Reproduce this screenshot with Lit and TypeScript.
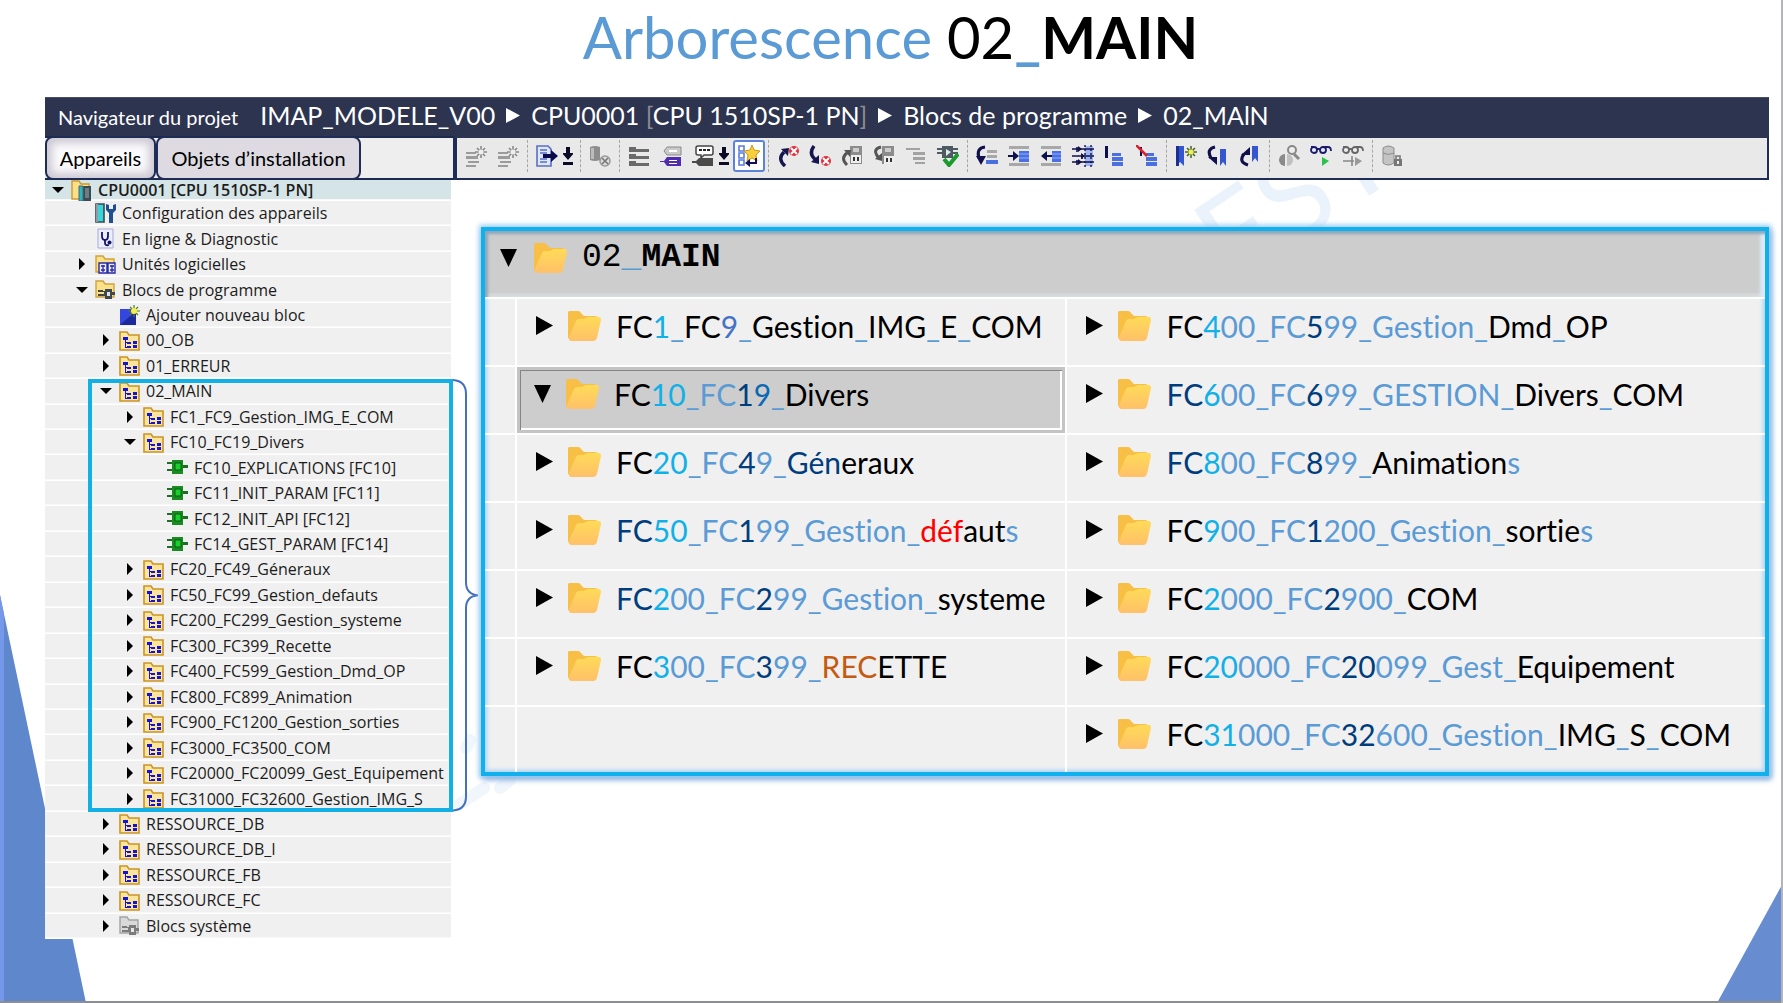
import { LitElement, html, svg, css, nothing } from "lit";
import type { TemplateResult } from "lit";
import { customElement } from "lit/decorators.js";
import { classMap } from "lit/directives/class-map.js";

type State = "open" | "closed" | "leaf";

interface TreeRow {
  level: number;
  state: State;
  icon: string;
  label: string;
}

const row = (level: number, state: State, icon: string, label: string): TreeRow => ({ level, state, icon, label });

const TREE: TreeRow[] = [
  row(0, "open", "cpu", "CPU0001 [CPU 1510SP-1 PN]"),
  row(1, "leaf", "config", "Configuration des appareils"),
  row(1, "leaf", "diag", "En ligne & Diagnostic"),
  row(1, "closed", "units", "Unités logicielles"),
  row(1, "open", "blocks", "Blocs de programme"),
  row(2, "leaf", "add", "Ajouter nouveau bloc"),
  row(2, "closed", "group", "00_OB"),
  row(2, "closed", "group", "01_ERREUR"),
  row(2, "open", "group", "02_MAIN"),
  row(3, "closed", "group", "FC1_FC9_Gestion_IMG_E_COM"),
  row(3, "open", "group", "FC10_FC19_Divers"),
  row(4, "leaf", "fc", "FC10_EXPLICATIONS [FC10]"),
  row(4, "leaf", "fc", "FC11_INIT_PARAM [FC11]"),
  row(4, "leaf", "fc", "FC12_INIT_API [FC12]"),
  row(4, "leaf", "fc", "FC14_GEST_PARAM [FC14]"),
  row(3, "closed", "group", "FC20_FC49_Géneraux"),
  row(3, "closed", "group", "FC50_FC99_Gestion_defauts"),
  row(3, "closed", "group", "FC200_FC299_Gestion_systeme"),
  row(3, "closed", "group", "FC300_FC399_Recette"),
  row(3, "closed", "group", "FC400_FC599_Gestion_Dmd_OP"),
  row(3, "closed", "group", "FC800_FC899_Animation"),
  row(3, "closed", "group", "FC900_FC1200_Gestion_sorties"),
  row(3, "closed", "group", "FC3000_FC3500_COM"),
  row(3, "closed", "group", "FC20000_FC20099_Gest_Equipement"),
  row(3, "closed", "group", "FC31000_FC32600_Gestion_IMG_S"),
  row(2, "closed", "group", "RESSOURCE_DB"),
  row(2, "closed", "group", "RESSOURCE_DB_I"),
  row(2, "closed", "group", "RESSOURCE_FB"),
  row(2, "closed", "group", "RESSOURCE_FC"),
  row(2, "closed", "system", "Blocs système"),
];

/* Each segment starts with its colour key: k black, c cyan, b blue, n navy,
   i indigo, m medium blue, r red, o orange. */
const LEFT = [
  "kFC|c1|b_|kFC|i9|b_|kGestion|b_|kIMG|b_|kE|b_|kCOM",
  "kFC|c10|b_FC|n1|m9|b_|kDivers",
  "kFC|c20|b_FC|n4|b9_|nGén|keraux",
  "nFC|c50|b_FC|n1|b99_Gestion_|rdéf|kaut|bs",
  "nFC|c2|b00_FC|n2|b99_Gestion_|ksysteme",
  "kFC|c3|b00_FC|n3|b99_|oREC|kETTE",
  "",
];
const RIGHT = [
  "kFC|c4|b00_FC|n5|b99_Gestion_|kDmd|b_|kOP",
  "nFC|c6|b00_FC|n6|b99_GESTION_|kDivers|b_|kCOM",
  "nFC|c8|b00_FC|n8|b99_|kAnimation|bs",
  "kFC|c9|b00_FC|n1|b200_Gestion_|ksortie|bs",
  "kFC|c2|b000_FC|n2|b900_|kCOM",
  "kFC|c20|b000_FC|n20|b099_Gest_|kEquipement",
  "kFC|c31|b000_FC|n32|b600_Gestion_|kIMG|b_|kS|b_|kCOM",
];

const folderBase = (fill: string, edge: string) => svg`
  <path d="M1 2h7l2 3h9v13H1z" fill=${fill} stroke=${edge} stroke-width="1.4"/>`;

const TREE_ICONS: Record<string, TemplateResult> = {
  cpu: svg`<path d="M1 1h7l2 3h8v15H1z" fill="#fbe08a" stroke="#c99a35" stroke-width="1.4"/>
    <path d="M8 6h12v15H8z" fill="#3b4a54"/><path d="M8 6h4v15H8z" fill="#2bb7c0" stroke="#52656d"/>
    <path d="M14 8h4v10h-4z" fill="#6d7d86"/>`,
  config: svg`<path d="M1 1h8v18H1z" fill="#39d5dc" stroke="#3a4a52" stroke-width="1.6"/>
    <path d="M1 1h2v18H1z" fill="#8e9ca3"/>
    <path d="M11 1v6l3 3v10h4V10l3-3V1l-3 1v4h-4V2z" fill="#1e5091"/>`,
  diag: svg`<path d="M3 1h15v19H3z" fill="#eceefb" stroke="#a5abd6"/>
    <path d="M7 4v4q0 4 3 4t3-4V4M10 12v3q0 3 4 2" fill="none" stroke="#16166c" stroke-width="1.8"/>
    <circle cx="14.500" cy="14.500" r="2" fill="#16166c"/>`,
  units: svg`${folderBase("#fbe08a", "#d0a23a")}
    <path d="M4 9h8v10H4zM13 9h7v10h-7z" fill="#e8eaff" stroke="#2a2aa0" stroke-width="1.4"/>
    <path d="M6 12h4M6 16h4M15 12h4M15 16h4M8 11v7M17 11v7" stroke="#2a2aa0" stroke-width="1.3"/>`,
  blocks: svg`${folderBase("#fbe08a", "#d0a23a")}
    <path d="M3 11h5v1h2v-2h7v3h3v3h-3v4h-7v-3H3v-2h6v-2H3z" fill="#3f474d"/><path d="M12 13h3v4h-3z" fill="#dfe3e6"/>`,
  system: svg`${folderBase("#d9d9d9", "#a3a3a3")}
    <path d="M3 11h5v1h2v-2h7v3h3v3h-3v4h-7v-3H3v-2h6v-2H3z" fill="#7c7c7c"/><path d="M12 13h3v4h-3z" fill="#e6e6e6"/>`,
  add: svg`<path d="M1 4h16v16H1z" fill="#3347de"/><path d="M1 20L17 6v14z" fill="#1c2a9c"/>
    <path d="M15 0v12M9 6h12M11 2l8 8M19 2l-8 8" stroke="#5c7a1c" stroke-width="1.2"/>
    <circle cx="15" cy="6" r="3" fill="#f2f04a"/>`,
  group: svg`<path d="M1 2h7l2 3h10v15H1z" fill="#fbe59a" stroke="#c99425" stroke-width="1.6"/>
    <path d="M4 7h5v3H4zM8 12h4v2H8zM14 11h4v3h-4zM8 16h4v2H8zM14 15h4v3h-4zM6 10h1v8H6zM6 12h3v1H6zM6 17h3v1H6z" fill="#1414d2"/>`,
  fc: svg`<path d="M0 5h5v2H0zM0 12h5v2H0zM15 8h6v3h-6z" fill="#1c6e22"/>
    <path d="M5 3h11v14H5z" fill="#1a8a22"/><path d="M8 6h6v7H8z" fill="#17d02c" stroke="#0b5a12"/>`,
};

const caret = svg`<path d="M4 1h4v6h4l-6 7-6-7h4z" fill="#0b0b28" transform="translate(-1)"/><path d="M0 16h10v3H0z" fill="#0b0b28"/>`;

const spark = (color: string, core: string) => svg`
  <path d="M16 1v12M10 7h12M12 3l8 8M20 3l-8 8" stroke=${color} stroke-width="1.6" stroke-dasharray="4 4"/>
  <circle cx="16" cy="7" r="2.500" fill=${core}/>`;

const TOOLS: Record<string, TemplateResult> = {
  insert: svg`<path d="M1 7h10v2H1zM1 11h12v3H1zM3 16h11v2H3zM1 20h10v2H1z" fill="#9b9b9b"/>${spark("#8a8a8a", "#eee")}`,
  export: svg`<path d="M1 1h11l3 3v17H1z" fill="#dfe6ff" stroke="#5a6fc4" stroke-width="1.6"/>
    <path d="M4 5h7M4 8h7M4 14h7M4 17h7" stroke="#5a6fc4" stroke-width="1.4"/>
    <path d="M7 9h8V5l7 6-7 6v-4H7z" fill="#0a0a4a"/>`,
  database: svg`<path d="M1 2q5-2 10 0v13q-5 2-10 0z" fill="#8d8d8d"/><path d="M2 3h3v11H2z" fill="#bbb"/>
    <circle cx="16" cy="16" r="5" fill="#ddd" stroke="#999" stroke-width="1.5"/><path d="M13 13l6 6M19 13l-6 6" stroke="#777" stroke-width="1.6"/>`,
  networks: svg`<path d="M1 2h7v2h13v3H1zM1 9h7v2h13v3H1zM1 16h7v2h13v3H1z" fill="#6a6a6a"/>`,
  tags: svg`<path d="M7 2h14v8H7L4 6z" fill="#c9c9c9" stroke="#8b8b8b"/><path d="M0 16h4l3-4h14v9H7l-3-4H0z" fill="#4f2bb0"/>
    <path d="M9 5h8v2H9zM9 15h8v1H9zM9 18h8v1H9z" fill="#fff"/>`,
  comment: svg`<path d="M6 1h13q2 0 2 2v5q0 2-2 2h-7l-3 3V10H6Q4 10 4 8V3q0-2 2-2z" fill="#fff" stroke="#444" stroke-width="1.5"/>
    <path d="M7 4h3v2H7zM11 4h3v2h-3zM15 4h3v2h-3z" fill="#222"/><path d="M0 16h4l3-3h14v8H7l-3-3H0z" fill="#4a4a4a"/>`,
  favorites: svg`<path d="M1 1h5v5H1zM1 8h5v5H1zM1 15h5v5H1z" fill="#fff" stroke="#5a7be0" stroke-width="1.6"/>
    <path d="M14 0l2 5 6 1-4 4 1 6-5-3-5 3 1-6-4-4 6-1z" fill="#f7cf3c" stroke="#c9971b"/>
    <path d="M18 13v5h-8" fill="none" stroke="#12125a" stroke-width="2"/><path d="M12 14v8l-5-4z" fill="#12125a"/>`,
  prevError: svg`<path d="M8 21Q0 14 7 7" fill="none" stroke="#16164e" stroke-width="3.500"/><path d="M4 4l8-1-1 8z" fill="#16164e"/>
    <circle cx="17" cy="6" r="5" fill="#e0323c"/><path d="M14 3l6 6M20 3l-6 6" stroke="#fff" stroke-width="2"/>`,
  nextError: svg`<path d="M5 1Q-1 9 7 15" fill="none" stroke="#16164e" stroke-width="3.500"/><path d="M10 10l0 9-8-2z" fill="#16164e"/>
    <circle cx="17" cy="16" r="5" fill="#e0323c"/><path d="M14 13l6 6M20 13l-6 6" stroke="#fff" stroke-width="2"/>`,
  jumpUp: svg`<path d="M9 1h12v18H9z" fill="#8c8c8c"/><path d="M12 3h6v4h-6z" fill="#ccc"/><path d="M10 10h10v8H10z" fill="#eee"/>
    <path d="M12 12h2v4h-2zM16 12h2v4h-2z" fill="#333"/><path d="M6 20Q-1 13 6 8" fill="none" stroke="#555" stroke-width="3"/><path d="M3 5l7 0-1 7z" fill="#555"/>`,
  jumpDown: svg`<path d="M9 1h12v18H9z" fill="#8c8c8c"/><path d="M12 3h6v4h-6z" fill="#ccc"/><path d="M11 11h10v8H11z" fill="#eee"/>
    <path d="M13 13h2v4h-2zM17 13h2v4h-2z" fill="#333"/><path d="M8 2Q-1 4 5 12" fill="none" stroke="#555" stroke-width="3"/><path d="M9 8v8l-7-2z" fill="#555"/>`,
  list: svg`<path d="M1 3h14v2H1zM8 7h12v3H8zM8 12h12v3H8zM10 17h10v2H10z" fill="#a2a2a2"/>`,
  compile: svg`<path d="M5 1h11v2h5v2h-5v2h5v2h-5v4H5V9H0V7h5V5H0V3h5z" fill="#4d5a62"/><path d="M9 4l5 3-5 4z" fill="#e2e8ea"/>
    <path d="M7 14l5 6 9-11" fill="none" stroke="#189a2c" stroke-width="4"/>`,
  goto: svg`<path d="M9 2Q0 3 3 13" fill="none" stroke="#10104c" stroke-width="3.200"/><path d="M0 11h10l-5 9z" fill="#10104c"/>
    <path d="M11 5h10v3H11zM11 10h10v3H11z" fill="#a8a8a8"/><path d="M10 15h12v4H10z" fill="#4a6fe0"/>`,
  indent: svg`<path d="M1 1h20v3H1zM1 18h20v3H1z" fill="#a8a8a8"/><path d="M11 6h10v11H11z" fill="#4a6fe0"/><path d="M11 9h10M11 13h10" stroke="#8fb0ff"/>
    <path d="M0 10h5V6l6 5-6 5v-4H0z" fill="#10104c"/>`,
  outdent: svg`<path d="M1 1h20v3H1zM1 18h20v3H1z" fill="#a8a8a8"/><path d="M12 6h9v11h-9z" fill="#4a6fe0"/><path d="M12 9h9M12 13h9" stroke="#8fb0ff"/>
    <path d="M12 10H7V6l-6 5 6 5v-4h5z" fill="#10104c"/>`,
  grid: svg`<path d="M13 1h8v20h-8z" fill="#9fb6f2"/><path d="M0 4h22M0 11h22M0 17h22M5 2v5M10 9v5M5 15v5" stroke="#10104c" stroke-width="1.600"/>
    <path d="M13 0v22M19 0v22" stroke="#10104c" stroke-width="1.400" stroke-dasharray="2 2"/><path d="M6 1l4 3-4 3zM9 8l4 3-4 3zM6 14l4 3-4 3z" fill="#10104c"/>`,
  setMark: svg`<path d="M1 1h3v12H1z" fill="#10104c"/><path d="M8 8h9v3H8zM8 12h11v4H8zM8 17h11v4H8z" fill="#4a6fe0"/>`,
  clearMark: svg`<path d="M4 2h2v9H4z" fill="#10104c"/><path d="M9 8h9v3H9zM10 12h11v4H10zM10 17h11v4H10z" fill="#4a6fe0"/>
    <path d="M0 0l11 11" stroke="#d8232e" stroke-width="2.600"/>`,
  bookmark: svg`<path d="M1 1h8v20l-4-4-4 4z" fill="#3457cf"/><path d="M1 1h3v20l-3 0z" fill="#1b2f8f"/>${spark("#4d6a2a", "#f2f04a")}`,
  nextBookmark: svg`<path d="M8 2Q-1 4 4 13" fill="none" stroke="#10104c" stroke-width="3.200"/><path d="M1 12h9v8z" fill="#10104c"/>
    <path d="M13 4h6v17l-3-4-3 4z" fill="#3457cf"/>`,
  prevBookmark: svg`<path d="M9 20Q-1 17 5 9" fill="none" stroke="#10104c" stroke-width="3.200"/><path d="M2 10h9V2z" fill="#10104c"/>
    <path d="M13 1h6v16l-3-4-3 4z" fill="#3457cf"/>`,
  compare: svg`<circle cx="14" cy="5" r="4" fill="#eee" stroke="#888" stroke-width="2"/><path d="M16 9l5 5" stroke="#888" stroke-width="3"/>
    <path d="M7 9v12A6 6 0 0 1 7 9z" fill="#8a8a8a"/><path d="M9 9v12A6 6 0 0 0 9 9z" fill="#c0c0c0"/>`,
  monitor: svg`<circle cx="4" cy="5" r="3" fill="#e6eaff" stroke="#1b1b6e" stroke-width="1.800"/><circle cx="13" cy="5" r="3" fill="#e6eaff" stroke="#1b1b6e" stroke-width="1.800"/>
    <path d="M1 2h3M7 4h3M13 2h5q3 0 3 4" fill="none" stroke="#1b1b6e" stroke-width="1.800"/><path d="M12 12l7 4-7 5z" fill="#2ac24a"/>`,
  monitorOff: svg`<circle cx="4" cy="5" r="3" fill="#eee" stroke="#666" stroke-width="1.800"/><circle cx="13" cy="5" r="3" fill="#eee" stroke="#666" stroke-width="1.800"/>
    <path d="M1 2h3M7 4h3M13 2h5q3 0 3 4" fill="none" stroke="#666" stroke-width="1.800"/><path d="M1 16h11M10 11v10" stroke="#888" stroke-width="1.600"/><path d="M13 12l7 4-7 5z" fill="#999"/>`,
  locked: svg`<path d="M2 3q5-4 11 0v15q-6 4-11 0z" fill="#c4c4c4" stroke="#8c8c8c"/><path d="M2 8q5 3 11 0" fill="none" stroke="#8c8c8c"/>
    <path d="M13 14h8v7h-8z" fill="#777"/><path d="M15 14v-3h4v3" fill="none" stroke="#777" stroke-width="1.600"/><path d="M16 16h2v3h-2z" fill="#eee"/>`,
};

/* "|" is a separator, "caret" a drop-down arrow; the rest are [icon, name]. */
const TOOLBAR: (string | [string, string])[] = [
  ["insert", "Insérer réseau"], ["insert", "Supprimer réseau"], "|",
  ["export", "Exporter"], "caret", "|",
  ["database", "Base"], "|",
  ["networks", "Réseaux"], ["tags", "Variables"], ["comment", "Commentaires"], "caret", ["favorites", "Favoris"], "|",
  ["prevError", "Erreur précédente"], ["nextError", "Erreur suivante"], ["jumpUp", "Précédent"], ["jumpDown", "Suivant"], ["list", "Liste"], ["compile", "Compiler"], "|",
  ["goto", "Aller à"], ["indent", "Retrait"], ["outdent", "Retrait négatif"], ["grid", "Grille"], ["setMark", "Commenter"], ["clearMark", "Décommenter"], "|",
  ["bookmark", "Signet"], ["nextBookmark", "Signet suivant"], ["prevBookmark", "Signet précédent"], "|",
  ["compare", "Comparer"], ["monitor", "Visualiser"], ["monitorOff", "Arrêter"], "|",
  ["locked", "Verrou"],
];

@customElement("app-root")
export class AppRoot extends LitElement {
  static styles = css`
    :host {
      display: block;
      color: #000;
      font-family: Lato, "Liberation Sans", sans-serif;
      font-variant-ligatures: none;
    }
    * { box-sizing: border-box; }
    button {
      font: inherit;
      color: inherit;
      background: none;
      border: 0;
      padding: 0;
      margin: 0;
      cursor: pointer;
    }
    a { color: inherit; text-decoration: none; }
    svg { display: block; }

    .slide {
      position: relative;
      z-index: 0;
      display: flex;
      flex-direction: column;
      min-height: 100vh;
      padding: 0 12px 64px 45px;
      background: #fff;
      border-right: 2px solid #b4b4b8;
      overflow: hidden;
    }
    .decor { position: absolute; z-index: -1; bottom: 0; }
    .wedge-left { left: 0; width: 86px; height: 408px; }
    .wedge-right { right: -2px; width: 66px; height: 120px; }
    .base-line { left: 0; right: -2px; height: 2px; background: #8c8e94; z-index: 2; }
    .watermark {
      position: absolute;
      z-index: -1;
      left: 1190px;
      top: 126px;
      transform: rotate(-34deg);
      font-size: 120px;
      line-height: 132px;
      color: #eaf2fb;
    }
    .smudge { position: absolute; z-index: -1; left: 440px; top: 710px; width: 90px; height: 100px; }

    h1 {
      margin: 0 0 0 -33px;
      height: 97px;
      padding-top: 4px;
      font-size: 58px;
      line-height: 66px;
      font-weight: 400;
      text-align: center;
      white-space: nowrap;
    }
    h1 b { font-weight: 700; }

    .k { color: #000; }
    .c { color: #10b0e8; }
    .b { color: #5b9bd5; }
    .n { color: #003d7c; }
    .i { color: #4472c4; }
    .m { color: #0a68b4; }
    .r { color: #f00; }
    .o { color: #c55a11; }

    .titlebar {
      display: flex;
      align-items: center;
      height: 39px;
      padding: 0 0 4px 13px;
      background: #2d3450;
      border-top: 1px solid #4b4d5e;
      color: #fff;
      white-space: nowrap;
    }
    .titlebar h2 { margin: 0 22px 0 0; font-size: 20px; line-height: 24px; font-weight: 400; padding-top: 4px; }
    .crumbs { display: flex; align-items: center; gap: 11px; font-size: 25px; line-height: 30px; }
    .crumbs .dim { color: #8d8c90; }
    .play { width: 14px; height: 15px; fill: #fff; }

    .bars { display: flex; height: 44px; }
    .tabs {
      display: flex;
      width: 408px;
      background: #eee;
      border: solid #1c2a50;
      border-width: 2px 0;
    }
    .tab {
      margin: -2px 0 -2px;
      height: 44px;
      border: 2px solid #1f2c55;
      border-radius: 8px;
      background: #dddae2;
      font-size: 20px;
      line-height: 24px;
      white-space: nowrap;
    }
    .tab.devices {
      width: 111px;
      background: #fbfafc;
      box-shadow: inset 0 0 8px 5px #cbc8d2;
    }
    .tab.setup { width: 205px; }
    .toolbar {
      flex: 1;
      display: flex;
      align-items: center;
      padding: 0 0 5px 3px;
      background: #e9e9ea;
      border: 2px solid #1f2c55;
      border-left-width: 4px;
      border-top-color: #2d3450;
      min-width: 0;
      overflow: hidden;
    }
    .tool { display: grid; place-items: center; width: 32px; height: 32px; flex: none; }
    .tool svg { width: 22px; height: 22px; }
    .tool.active { box-shadow: inset 0 0 0 2px #5b84d8; border-radius: 3px; background: #fff; }
    .drop { width: 14px; flex: none; }
    .drop svg { width: 10px; height: 19px; }
    .sep { flex: none; width: 1px; height: 32px; margin: 0 3px; border-left: 1px dashed #a5a5a5; }

    .body {
      flex: 1;
      display: grid;
      grid-template-columns: 406px 30px minmax(0, 1fr);
      grid-template-rows: 21px repeat(29, minmax(24px, 1fr));
    }
    .tree {
      grid-column: 1;
      grid-row: 1 / -1;
      display: grid;
      grid-template-rows: subgrid;
      margin: 0;
      padding: 0;
      list-style: none;
      font-family: "Open Sans", "Noto Sans", sans-serif;
      font-size: 16px;
      line-height: 20px;
      color: #1c1c1c;
      background: #f0f0f0;
    }
    .node {
      display: flex;
      align-items: center;
      border-bottom: 1px solid #fff;
      box-shadow: inset 0 -1px #f8f8f8;
      padding-left: 5px;
      white-space: nowrap;
      min-height: 0;
    }
    .node.root { background: #d5e4e6; font-weight: 600; }
    .l1 { padding-left: 29px; }
    .l2 { padding-left: 53px; }
    .l3 { padding-left: 77px; }
    .l4 { padding-left: 101px; }
    .toggle { display: grid; place-items: center; width: 16px; height: 20px; margin-right: 5px; flex: none; }
    .toggle svg { width: 12px; height: 12px; }
    .node-icon { width: 21px; height: 21px; margin-right: 6px; flex: none; }

    .frame {
      grid-column: 1;
      grid-row: 9 / 26;
      margin: 0 -2px 0 43px;
      border: 4px solid #12b0e4;
      z-index: 1;
      pointer-events: none;
    }
    .brace { grid-column: 2; grid-row: 9 / 26; width: 26px; height: 100%; margin-left: 2px; }

    .panel {
      grid-column: 3;
      grid-row: 1 / -1;
      align-self: start;
      margin-top: 47px;
      border: 4px solid #0fb0ec;
      box-shadow: 0 0 5px 2px #9ccdf5, 2px 3px 6px #6b93c8;
      background: #f0f0f0;
    }
    table { width: 100%; table-layout: fixed; border-collapse: collapse; box-shadow: inset 0 0 4px 2px #a9d3f7; }
    .c-indent { width: 31px; }
    .c-left { width: 43%; }
    th, td { padding: 0; font-weight: 400; text-align: left; vertical-align: top; }
    td { height: 68px; border: 2px solid #fff; border-width: 2px 2px 0 0; }
    td:last-child { border-right: 0; }
    tr:last-child td { height: 66px; }
    .head {
      height: 67px;
      background: #cdcdcd;
      box-shadow: inset 3px 3px 3px #8fa5ba, inset -5px 0 3px #dbeaf8, inset 0 -4px 2px #d6d6d6;
    }
    .entry { display: flex; align-items: center; height: 53px; padding-left: 19px; font-size: 30px; line-height: 36px; white-space: nowrap; }
    .entry .mark { margin-right: 15px; }
    .entry .folder { margin-right: 15px; }
    .head .entry { padding-left: 15px; font-family: "Liberation Mono", monospace; font-size: 33px; }
    .head .mark { margin-right: 17px; }
    .mark { width: 17px; height: 19px; flex: none; }
    .folder { width: 33px; height: 30px; flex: none; }
    .picked { background: #cdcdcd; box-shadow: inset 0 0 0 3px #c4c4c4, inset 4px 4px 0 #858585, inset -5px -5px 0 #fff; }
    .picked .entry { padding-left: 17px; }
  `;

  private segments(text: string) {
    return text.split("|").map((s) => html`<span class=${s[0]}>${s.slice(1)}</span>`);
  }

  private mark(open: boolean) {
    return html`<svg class="mark" viewBox="0 0 17 19" aria-hidden="true">
      <path d=${open ? "M0 1h17L8.5 19z" : "M0 0l17 9.500L0 19z"}></path>
    </svg>`;
  }

  private folder() {
    return html`<svg class="folder" viewBox="0 0 33 30" aria-hidden="true">
      <defs>
        <linearGradient id="front" x1="0" y1="0" x2="0" y2="1">
          <stop offset="0" stop-color="#ffdb58"></stop><stop offset="1" stop-color="#ffc069"></stop>
        </linearGradient>
      </defs>
      <path d="M0 1q0-1 2-1h8q2 0 3 2l3 3h11q3 0 3 3v3L24 28H3q-3 0-3-2z" fill="#f7bf45"></path>
      <path d="M8 10q1-2 3-2h5l4-2h11q2 0 2 3l-4 18q-1 3-3 3H4q-4 0-3-4z" fill="url(#front)"></path>
    </svg>`;
  }

  private entry(text: string, open = false) {
    if (!text) return nothing;
    return html`<div class="entry">${this.mark(open)}${this.folder()}<span>${this.segments(text)}</span></div>`;
  }

  private node(r: TreeRow) {
    return html`<li class=${classMap({ node: true, root: r.level === 0, [`l${r.level}`]: true })}>
      ${r.state === "leaf"
        ? html`<span class="toggle"></span>`
        : html`<button class="toggle" aria-label=${r.label} aria-expanded=${r.state === "open"}>
            <svg viewBox="0 0 12 12"><path d=${r.state === "open" ? "M0 3h12L6 9z" : "M3 0l6 6-6 6z"}></path></svg>
          </button>`}
      <svg class="node-icon" viewBox="0 0 21 21" aria-hidden="true">${TREE_ICONS[r.icon]}</svg>
      <span>${r.label}</span>
    </li>`;
  }

  private tool(item: string | [string, string]) {
    if (item === "|") return html`<span class="sep"></span>`;
    if (typeof item === "string")
      return html`<button class="drop" aria-label="Options"><svg viewBox="0 0 10 19">${caret}</svg></button>`;
    const [icon, name] = item;
    return html`<button class=${classMap({ tool: true, active: icon === "favorites" })} aria-label=${name}>
      <svg viewBox="0 0 22 22">${TOOLS[icon]}</svg>
    </button>`;
  }

  render() {
    const play = html`<svg class="play" viewBox="0 0 14 15" aria-hidden="true"><path d="M0 0l14 7.500L0 15z"></path></svg>`;
    return html`
      <main class="slide">
        <svg class="decor wedge-left" viewBox="0 0 86 416" preserveAspectRatio="none" aria-hidden="true">
          <path d="M0 0l86 416H0z" fill="#5e87cc"></path><path d="M0 0l4 20v396H0z" fill="#7598ea"></path>
        </svg>
        <svg class="decor wedge-right" viewBox="0 0 66 120" preserveAspectRatio="none" aria-hidden="true">
          <path d="M66 0v120H0z" fill="#678dd0"></path>
        </svg>
        <div class="decor base-line"></div>
        <div class="watermark" aria-hidden="true">EST</div>
        <svg class="smudge" viewBox="0 0 90 100" aria-hidden="true">
          <path d="M20 94L44 78M26 38l4-8M60 78l10-8" stroke="#f0f6fc" stroke-width="12" stroke-linecap="round"></path>
        </svg>

        <h1><span class="b">Arborescence</span> 02<b><span class="b">_</span>MAIN</b></h1>

        <header class="titlebar">
          <h2>Navigateur du projet</h2>
          <nav class="crumbs">
            <a href="#projet">IMAP_MODELE_V00</a>${play}
            <a href="#cpu">CPU0001 <span class="dim">[</span>CPU 1510SP-1 PN<span class="dim">]</span></a>${play}
            <a href="#blocs">Blocs de programme</a>${play}
            <a href="#main">02_MAlN</a>
          </nav>
        </header>

        <div class="bars">
          <div class="tabs">
            <button class="tab devices">Appareils</button>
            <button class="tab setup">Objets d’installation</button>
          </div>
          <div class="toolbar">${TOOLBAR.map((t) => this.tool(t))}</div>
        </div>

        <section class="body">
          <ul class="tree">${TREE.map((r) => this.node(r))}</ul>
          <div class="frame"></div>
          <svg class="brace" viewBox="0 0 26 432" preserveAspectRatio="none" aria-hidden="true">
            <path d="M0 1q13 1 13 14v188q0 12 12 13q-12 1-12 13v188q0 13-13 14" fill="none" stroke="#4470bd" stroke-width="2"></path>
          </svg>
          <div class="panel">
            <table>
              <colgroup><col class="c-indent"><col class="c-left"><col></colgroup>
              <thead>
                <tr><th class="head" colspan="3">
                  <div class="entry">${this.mark(true)}${this.folder()}<span>02<span class="b">_</span><b>MAIN</b></span></div>
                </th></tr>
              </thead>
              <tbody>
                ${LEFT.map((left, i) => html`<tr>
                  <td></td>
                  <td class=${classMap({ picked: i === 1 })}>${this.entry(left, i === 1)}</td>
                  <td>${this.entry(RIGHT[i])}</td>
                </tr>`)}
              </tbody>
            </table>
          </div>
        </section>
      </main>
    `;
  }
}
